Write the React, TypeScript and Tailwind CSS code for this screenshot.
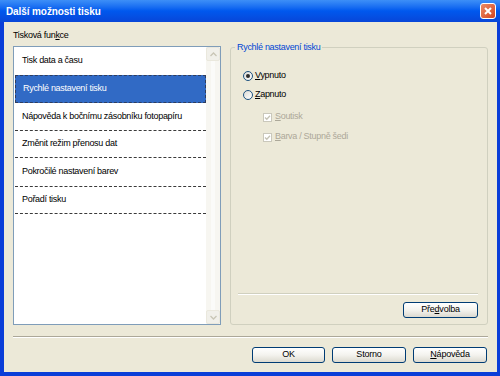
import { type ReactNode } from "react";

const ITEMS = [
  { label: "Tisk data a času", h: "h-[28px]" },
  { label: "Rychlé nastavení tisku", h: "h-[28px]", selected: true },
  { label: "Nápověda k bočnímu zásobníku fotopapíru", h: "h-[28px]" },
  { label: "Změnit režim přenosu dat", h: "h-[27px]" },
  { label: "Pokročilé nastavení barev", h: "h-[29px]" },
  { label: "Pořadí tisku", h: "h-[27px]" },
];

function XpButton({ children, className = "" }: { children: ReactNode; className?: string }) {
  return (
    <div
      className={`flex h-[16px] items-center justify-center rounded-[3px] border border-[#003C74] bg-gradient-to-b from-white via-[#F4F3EE] to-[#DCDAD0] text-[9px] tracking-[-0.2px] text-black ${className}`}
    >
      {children}
    </div>
  );
}

function Radio({ checked }: { checked?: boolean }) {
  return (
    <div className="flex h-[10px] w-[10px] items-center justify-center rounded-full border border-[#1C5180] bg-gradient-to-br from-[#DCDBD5] to-white">
      {checked && <div className="h-[4px] w-[4px] rounded-full bg-[#2B2B2B]" />}
    </div>
  );
}

function DisabledCheck() {
  return (
    <div className="flex h-[9px] w-[9px] items-center justify-center border border-[#CAC8BB] bg-white">
      <svg width="7" height="7" viewBox="0 0 7 7">
        <path d="M1 3.5 L2.8 5.3 L6 1.8" stroke="#C4C2B4" strokeWidth="1.3" fill="none" />
      </svg>
    </div>
  );
}

function Chevron({ up }: { up?: boolean }) {
  return (
    <svg width="7" height="5" viewBox="0 0 7 5">
      <path
        d={up ? "M0.5 4 L3.5 1 L6.5 4" : "M0.5 1 L3.5 4 L6.5 1"}
        stroke="#C9C6B6"
        strokeWidth="1.3"
        fill="none"
      />
    </svg>
  );
}

export default function App() {
  return (
    <div className="flex h-[376px] w-[500px] flex-col bg-[#0A3ED8] font-['Liberation_Sans',Arial,sans-serif]">
      {/* title bar */}
      <div className="flex h-[22px] items-center justify-between bg-gradient-to-b from-[#3D8FF7] via-[#0058EE] to-[#0846D8] pl-[6px] pr-[4px]">
        <span className="text-[10px] font-bold tracking-[-0.1px] text-white">Další možnosti tisku</span>
        <div className="flex h-[16px] w-[16px] items-center justify-center rounded-[3px] border border-white bg-gradient-to-br from-[#EB8A64] to-[#D4431C]">
          <svg width="10" height="10" viewBox="0 0 10 10">
            <path d="M2 2 L8 8 M8 2 L2 8" stroke="white" strokeWidth="2" />
          </svg>
        </div>
      </div>

      {/* client */}
      <div className="mb-[4px] ml-[4px] mr-[3px] flex flex-1 flex-col bg-[#ECE9D8] px-[9px] pt-[7px] text-[9px] tracking-[-0.3px] text-black">
        <div className="h-[12px] leading-[12px]">
          Tisková fun<span className="underline">k</span>ce
        </div>

        <div className="flex">
          {/* list box */}
          <div className="mt-[5px] flex h-[279px] w-[208px] border border-[#7F9DB9] bg-white">
            <div className="flex flex-1 flex-col pl-[1px]">
              {ITEMS.map((it, i) => (
                <div
                  key={it.label}
                  className={`flex ${it.h} items-center pl-[7px] ${
                    it.selected
                      ? "border border-dashed border-[#2E3D5E] bg-[#316AC5] text-white"
                      : i === 0
                        ? ""
                        : "border-b border-dashed border-[#3A3A3A]"
                  }`}
                >
                  {it.label}
                </div>
              ))}
            </div>
            <div className="flex w-[14px] flex-col bg-[#F7F6F1]">
              <div className="flex h-[14px] items-center justify-center rounded-[2px] border border-[#EAE8DD] bg-[#F1F0EA]">
                <Chevron up />
              </div>
              <div className="flex flex-1 justify-center">
                <div className="w-[4px] bg-[#FBFBF9]" />
              </div>
              <div className="flex h-[14px] items-center justify-center rounded-[2px] border border-[#EAE8DD] bg-[#F1F0EA]">
                <Chevron />
              </div>
            </div>
          </div>

          {/* group box */}
          <div className="relative ml-[9px] mt-[6px] flex h-[278px] w-[258px] flex-col rounded-[3px] border border-[#D0D0BF]">
            <div className="absolute -top-[7px] left-[4px] bg-[#ECE9D8] px-[2px] leading-[12px] text-[#0046D5]">
              Rychlé nastavení tisku
            </div>

            <div className="ml-[12px] mt-[23px] flex h-[10px] items-center gap-[2px]">
              <Radio checked />
              <span>
                <span className="underline">V</span>ypnuto
              </span>
            </div>
            <div className="ml-[12px] mt-[9px] flex h-[10px] items-center gap-[2px]">
              <Radio />
              <span>
                <span className="underline">Z</span>apnuto
              </span>
            </div>
            <div className="ml-[32px] mt-[12px] flex h-[10px] items-center gap-[3px] text-[#ACA899]">
              <DisabledCheck />
              <span>
                <span className="underline">S</span>outisk
              </span>
            </div>
            <div className="ml-[32px] mt-[10px] flex h-[10px] items-center gap-[3px] text-[#ACA899]">
              <DisabledCheck />
              <span>
                <span className="underline">B</span>arva / Stupně šedi
              </span>
            </div>

            <div className="mt-auto ml-[7px] mr-[9px] border-t border-b border-t-[#D0D0BF] border-b-white" />
            <div className="mb-[6px] mr-[9px] mt-[7px] flex justify-end">
              <XpButton className="w-[75px]">
                Pře<span className="underline">d</span>volba
              </XpButton>
            </div>
          </div>
        </div>

        {/* separator */}
        <div className="mt-[11px] border-t border-b border-t-[#ACA899] border-b-white" />

        <div className="mt-[9px] flex justify-end gap-[7px] pr-[1px]">
          <XpButton className="w-[73px]">OK</XpButton>
          <XpButton className="w-[74px]">Storno</XpButton>
          <XpButton className="w-[74px]">
            <span className="underline">N</span>ápověda
          </XpButton>
        </div>
      </div>
    </div>
  );
}
